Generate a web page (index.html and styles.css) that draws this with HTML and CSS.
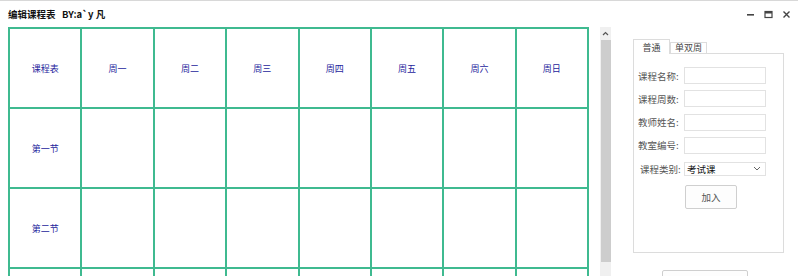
FILE: index.html
```html
<!DOCTYPE html>
<html lang="zh-CN">
  <head>
    <meta charset="UTF-8" />
    <title>编辑课程表</title>
    <link rel="stylesheet" href="styles.css">
  </head>
  <body>
    <div class="window">
      <header class="titlebar">
        <span class="titlebar__text">编辑课程表&nbsp;&nbsp;&nbsp;BY:a`y 凡</span>
        <div class="titlebar__controls">
          <svg width="9" height="9" viewBox="0 0 9 9"><rect x="1" y="4" width="7" height="1.6" fill="#444"/></svg>
          <svg width="9" height="9" viewBox="0 0 9 9"><rect x="1" y="1.5" width="7" height="6" fill="none" stroke="#444" stroke-width="1.2"/><rect x="1" y="1.5" width="7" height="2" fill="#444"/></svg>
          <svg width="9" height="9" viewBox="0 0 9 9"><path d="M1.5 1.5 L7.5 7.5 M7.5 1.5 L1.5 7.5" stroke="#444" stroke-width="1.4"/></svg>
        </div>
      </header>

      <main class="main">
        <section class="schedule">
          <div class="schedule__grid">
            <div class="cell">课程表</div>
            <div class="cell">周一</div>
            <div class="cell">周二</div>
            <div class="cell">周三</div>
            <div class="cell">周四</div>
            <div class="cell">周五</div>
            <div class="cell">周六</div>
            <div class="cell">周日</div>

            <div class="cell">第一节</div>
            <div class="cell"></div><div class="cell"></div><div class="cell"></div>
            <div class="cell"></div><div class="cell"></div><div class="cell"></div><div class="cell"></div>

            <div class="cell">第二节</div>
            <div class="cell"></div><div class="cell"></div><div class="cell"></div>
            <div class="cell"></div><div class="cell"></div><div class="cell"></div><div class="cell"></div>

            <!-- third row only shows its top edge in the window -->
            <div class="cell"></div>
            <div class="cell"></div><div class="cell"></div><div class="cell"></div>
            <div class="cell"></div><div class="cell"></div><div class="cell"></div><div class="cell"></div>
          </div>
        </section>

        <div class="scrollbar">
          <svg class="scrollbar__arrow" width="7" height="5" viewBox="0 0 7 5"><path d="M1 4 L3.5 1.5 L6 4" fill="none" stroke="#555" stroke-width="1.2"/></svg>
          <div class="scrollbar__thumb"></div>
        </div>

        <aside class="side">
          <div class="tabs">
            <span class="tab tab--active">普通</span>
            <span class="tab">单双周</span>
          </div>
          <div class="tab-panel">
            <div class="form">
              <div class="form__row">
                <label class="form__label">课程名称:</label>
                <span class="form__input"></span>
              </div>
              <div class="form__row">
                <label class="form__label">课程周数:</label>
                <span class="form__input"></span>
              </div>
              <div class="form__row">
                <label class="form__label">教师姓名:</label>
                <span class="form__input"></span>
              </div>
              <div class="form__row">
                <label class="form__label">教室编号:</label>
                <span class="form__input"></span>
              </div>
              <div class="form__row">
                <label class="form__label form__label--shift">课程类别:</label>
                <span class="form__input form__select">
                  <span>考试课</span>
                  <svg width="8" height="5" viewBox="0 0 8 5"><path d="M1 1 L4 4 L7 1" fill="none" stroke="#666" stroke-width="1"/></svg>
                </span>
              </div>
            </div>
            <button class="button">加入</button>
          </div>
          <button class="button button--wide"></button>
        </aside>
      </main>
    </div>
  </body>
</html>
```

FILE: styles.css
```css
/* Global styles */
html,
body,
* {
  padding: 0;
  margin: 0;
  box-sizing: border-box;
  font-family: "Noto Sans CJK SC", "Noto Sans", sans-serif;
}

:root {
  --lineColor: #3fba90;
  --headColor: #24249c;
  --labelColor: #555555;
  --borderColor: #dcdcdc;
}

body {
  width: 798px;
  height: 276px;
  overflow: hidden;
  background-color: #ffffff;
}

.window {
  height: 276px;
  border-top: 1px solid #d8d8d8;
  display: flex;
  flex-direction: column;
}

.titlebar {
  height: 26px;
  flex-shrink: 0;
  display: flex;
  align-items: center;
  justify-content: space-between;
  padding: 0 7px 0 8px;
}

.titlebar__text {
  font-size: 9.5px;
  font-weight: bold;
  color: #111111;
}

.titlebar__controls {
  display: flex;
  gap: 9px;
  margin-top: 1px;
}

.main {
  flex: 1;
  display: flex;
  overflow: hidden;
}

.schedule {
  margin-left: 8px;
  width: 581px;
  overflow: hidden;
}

.schedule__grid {
  display: grid;
  grid-template-columns: repeat(8, 1fr);
  grid-auto-rows: 78px;
  gap: 2px;
  padding: 2px;
  background-color: var(--lineColor);
}

.cell {
  background-color: #ffffff;
  display: flex;
  align-items: center;
  justify-content: center;
  font-size: 9px;
  color: var(--headColor);
}

.scrollbar {
  margin-left: 11px;
  width: 11px;
  background-color: #f0f0f0;
  display: flex;
  flex-direction: column;
  align-items: center;
}

.scrollbar__arrow {
  margin-top: 4px;
  flex-shrink: 0;
}

.scrollbar__thumb {
  margin-top: 4px;
  width: 10px;
  height: 222px;
  flex-shrink: 0;
  background-color: #cdcdcd;
}

.side {
  margin-left: 22px;
  width: 152px;
  display: flex;
  flex-direction: column;
}

.tabs {
  margin-top: 11px;
  display: flex;
  align-items: flex-end;
  height: 15px;
  flex-shrink: 0;
}

.tab {
  font-size: 9px;
  color: #444444;
  height: 11px;
  line-height: 10px;
  padding: 0 4px;
  border: 1px solid var(--borderColor);
  border-bottom: none;
  background-color: #ffffff;
}

.tab--active {
  height: 15px;
  line-height: 16px;
  width: 37px;
  text-align: center;
  position: relative;
  top: 1px;
}

.tab-panel {
  width: 151px;
  height: 200px;
  flex-shrink: 0;
  border: 1px solid var(--borderColor);
  display: flex;
  flex-direction: column;
  align-items: flex-start;
}

.form {
  margin-top: 13px;
  display: flex;
  flex-direction: column;
  gap: 6.25px;
}

.form__row {
  display: flex;
  align-items: center;
  height: 17px;
}

.form__label {
  width: 50px;
  padding-left: 4px;
  font-size: 9.5px;
  color: var(--labelColor);
}

.form__label--shift {
  padding-left: 6px;
}

.form__input {
  width: 82px;
  height: 17px;
  border: 1px solid #e2e2e2;
  background-color: #ffffff;
}

.form__select {
  height: 14px;
  display: flex;
  align-items: center;
  justify-content: space-between;
  padding: 0 4px 0 2px;
  font-size: 9.5px;
  color: #111111;
}

.button {
  margin: 8px 0 0 51px;
  width: 52px;
  height: 24px;
  flex-shrink: 0;
  border: 1px solid #cfcfcf;
  border-radius: 2px;
  background-color: #fdfdfd;
  font-size: 9.5px;
  color: #555555;
}

.button--wide {
  margin: 17px 0 0 29px;
  width: 86px;
  height: 24px;
}
```
